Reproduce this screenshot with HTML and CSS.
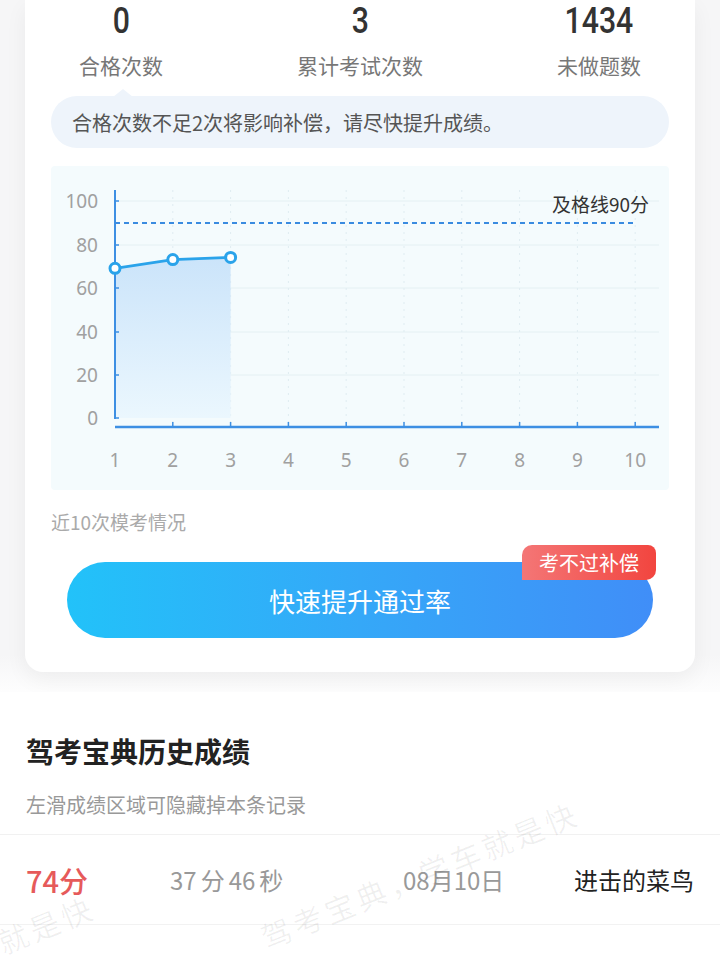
FILE: index.html
```html
<!DOCTYPE html>
<html lang="zh-CN">
<head>
<meta charset="utf-8">
<title>模考成绩</title>
<link rel="stylesheet" href="styles.css">
</head>
<body>
<div class="top">
  <div class="card">
    <div class="stats">
      <div class="stat"><div class="num">0</div><div class="label">合格次数</div></div>
      <div class="stat"><div class="num">3</div><div class="label">累计考试次数</div></div>
      <div class="stat"><div class="num">1434</div><div class="label">未做题数</div></div>
    </div>
    <div class="notice">合格次数不足2次将影响补偿，请尽快提升成绩。</div>
    <div class="chart">
      <svg class="chart-svg" viewBox="0 0 618 324" width="618" height="324">
        <defs>
          <linearGradient id="area" x1="0" y1="0" x2="0" y2="1">
            <stop offset="0" stop-color="#cbe4fa"/>
            <stop offset="1" stop-color="#ebf7fe"/>
          </linearGradient>
        </defs>
        <g stroke="#e4f0f3" stroke-width="1">
          <line x1="64" y1="35" x2="608" y2="35"/>
          <line x1="64" y1="79" x2="608" y2="79"/>
          <line x1="64" y1="122" x2="608" y2="122"/>
          <line x1="64" y1="166" x2="608" y2="166"/>
          <line x1="64" y1="209" x2="608" y2="209"/>
        </g>
        <g stroke="#dfecf1" stroke-width="1" stroke-dasharray="2 5">
          <line x1="121.8" y1="24" x2="121.8" y2="258"/>
          <line x1="179.6" y1="24" x2="179.6" y2="258"/>
          <line x1="237.4" y1="24" x2="237.4" y2="258"/>
          <line x1="295.2" y1="24" x2="295.2" y2="258"/>
          <line x1="353" y1="24" x2="353" y2="258"/>
          <line x1="410.8" y1="24" x2="410.8" y2="258"/>
          <line x1="468.6" y1="24" x2="468.6" y2="258"/>
          <line x1="526.4" y1="24" x2="526.4" y2="258"/>
          <line x1="584.2" y1="24" x2="584.2" y2="258"/>
        </g>
        <polygon points="64,102.3 121.8,93.6 179.6,91.4 179.6,252 64,252" fill="url(#area)"/>
        <line x1="64" y1="24" x2="64" y2="253" stroke="#3d8fe3" stroke-width="2"/>
        <g stroke="#3d8fe3" stroke-width="1.5">
          <line x1="64" y1="35" x2="68" y2="35"/>
          <line x1="64" y1="79" x2="68" y2="79"/>
          <line x1="64" y1="122" x2="68" y2="122"/>
          <line x1="64" y1="166" x2="68" y2="166"/>
          <line x1="64" y1="209" x2="68" y2="209"/>
          <line x1="64" y1="252" x2="68" y2="252"/>
        </g>
        <line x1="64" y1="261" x2="608" y2="261" stroke="#3d8fe3" stroke-width="2.5"/>
        <g stroke="#3d8fe3" stroke-width="1.5">
          <line x1="121.8" y1="256" x2="121.8" y2="261"/>
          <line x1="179.6" y1="256" x2="179.6" y2="261"/>
          <line x1="237.4" y1="256" x2="237.4" y2="261"/>
          <line x1="295.2" y1="256" x2="295.2" y2="261"/>
          <line x1="353" y1="256" x2="353" y2="261"/>
          <line x1="410.8" y1="256" x2="410.8" y2="261"/>
          <line x1="468.6" y1="256" x2="468.6" y2="261"/>
          <line x1="526.4" y1="256" x2="526.4" y2="261"/>
          <line x1="584.2" y1="256" x2="584.2" y2="261"/>
        </g>
        <line x1="64" y1="57" x2="584" y2="57" stroke="#3a8be0" stroke-width="1.8" stroke-dasharray="5 4"/>
        <polyline points="64,102.3 121.8,93.6 179.6,91.4" fill="none" stroke="#2aa3ea" stroke-width="2.8"/>
        <g fill="#ffffff" stroke="#2aa3ea" stroke-width="3">
          <circle cx="64" cy="102.3" r="5"/>
          <circle cx="121.8" cy="93.6" r="5"/>
          <circle cx="179.6" cy="91.4" r="5"/>
        </g>
        <g class="ylab" text-anchor="end">
          <text x="47" y="35">100</text>
          <text x="47" y="79">80</text>
          <text x="47" y="122">60</text>
          <text x="47" y="166">40</text>
          <text x="47" y="209">20</text>
          <text x="47" y="252">0</text>
        </g>
        <g class="xlab" text-anchor="middle">
          <text x="64" y="294">1</text>
          <text x="121.8" y="294">2</text>
          <text x="179.6" y="294">3</text>
          <text x="237.4" y="294">4</text>
          <text x="295.2" y="294">5</text>
          <text x="353" y="294">6</text>
          <text x="410.8" y="294">7</text>
          <text x="468.6" y="294">8</text>
          <text x="526.4" y="294">9</text>
          <text x="584.2" y="294">10</text>
        </g>
        <text class="passline" x="598" y="37" text-anchor="end">及格线90分</text>
      </svg>
    </div>
    <div class="caption">近10次模考情况</div>
    <div class="btn-wrap">
      <div class="btn">快速提升通过率</div>
      <div class="badge">考不过补偿</div>
    </div>
  </div>
</div>
<div class="history">
  <h2 class="h-title">驾考宝典历史成绩</h2>
  <div class="h-sub">左滑成绩区域可隐藏掉本条记录</div>
  <div class="list">
    <div class="row">
      <div class="score">74分</div>
      <div class="time">37<span class="unit">分</span>46<span class="unit">秒</span></div>
      <div class="date">08月10日</div>
      <div class="name">进击的菜鸟</div>
    </div>
    <div class="row row-next"></div>
  </div>
  <span class="wm wm1">驾考宝典，学车就是快</span>
  <span class="wm wm2">驾考宝典，学车就是快</span>
</div>
</body>
</html>
```

FILE: styles.css
```css
html, body {
  margin: 0;
  padding: 0;
  background: #ffffff;
  width: 720px;
  overflow: hidden;
}
body {
  font-family: "Noto Sans CJK SC", "Noto Sans", Roboto, sans-serif;
  color: #333;
}
.top {
  background: linear-gradient(to bottom, #f6f6f7 0, #f6f6f7 655px, #ffffff 700px);
  padding: 0 25px 20px;
}
.card {
  background: #ffffff;
  border-radius: 0 0 18px 18px;
  padding: 0 26px 34px;
  box-shadow: 0 8px 22px rgba(0, 0, 0, 0.05);
}
.stats {
  display: flex;
  justify-content: space-between;
  padding: 0 28px;
}
.stat {
  display: flex;
  flex-direction: column;
  align-items: center;
}
.num {
  font-family: Roboto, "Noto Sans", sans-serif;
  font-weight: 500;
  font-size: 36px;
  line-height: 42px;
  color: #333;
  transform: scaleX(0.84);
}
.label {
  margin-top: 8px;
  font-size: 21px;
  line-height: 30px;
  color: #777;
}
.notice {
  position: relative;
  margin-top: 16px;
  height: 52px;
  border-radius: 26px;
  background: #eef4fb;
  display: flex;
  align-items: center;
  padding: 0 21px;
  font-size: 20px;
  color: #555;
}
.notice::before {
  content: "";
  position: absolute;
  left: 62px;
  top: -7px;
  border-left: 10px solid transparent;
  border-right: 10px solid transparent;
  border-bottom: 8px solid #eef4fb;
}
.chart {
  margin-top: 18px;
  height: 324px;
  background: #f4fbfd;
  border-radius: 4px;
}
.chart-svg {
  display: block;
}
.ylab text, .xlab text {
  font-family: "Noto Sans", Roboto, sans-serif;
  font-size: 19px;
  fill: #a0a0a0;
  dominant-baseline: central;
}
.passline {
  font-family: "Noto Sans CJK SC", sans-serif;
  font-size: 19px;
  fill: #333;
  dominant-baseline: central;
}
.caption {
  margin-top: 19px;
  font-size: 19px;
  line-height: 26px;
  color: #aaa;
}
.btn-wrap {
  position: relative;
  margin: 27px 16px 0;
}
.btn {
  height: 76px;
  border-radius: 38px;
  background: linear-gradient(90deg, #22c2f9 0%, #35a8f8 50%, #408ef8 100%);
  color: #ffffff;
  font-size: 26px;
  display: flex;
  align-items: center;
  justify-content: center;
}
.badge {
  position: absolute;
  top: -17px;
  right: -3px;
  width: 134px;
  height: 35px;
  line-height: 35px;
  text-align: center;
  color: #ffffff;
  font-size: 20px;
  border-radius: 10px 8px 10px 0;
  background: linear-gradient(90deg, #f47676 0%, #f2453f 100%);
}
.history {
  position: relative;
  overflow: hidden;
  background: #ffffff;
  padding-top: 39px;
  height: 229px;
}
.h-title {
  margin: 0;
  padding: 0 26px;
  font-size: 28px;
  line-height: 40px;
  font-weight: 700;
  color: #222;
}
.h-sub {
  margin-top: 21px;
  padding: 0 26px;
  font-size: 20px;
  line-height: 26px;
  color: #999;
}
.list {
  margin-top: 16px;
  border-top: 1px solid #f1f1f1;
}
.row {
  display: grid;
  grid-template-columns: 144px 233px 1fr auto;
  align-items: center;
  height: 89px;
  padding: 0 26px;
  border-bottom: 1px solid #f2f2f2;
}
.row-next {
  border-bottom: none;
}
.score {
  font-size: 29px;
  font-weight: 500;
  color: #e65a5a;
}
.time {
  font-size: 24px;
  color: #999;
}
.unit {
  margin: 0 4px;
}
.date {
  font-size: 24px;
  color: #999;
}
.name {
  font-size: 24px;
  color: #222;
}
.wm {
  position: absolute;
  font-size: 30px;
  line-height: 40px;
  letter-spacing: 4px;
  white-space: nowrap;
  color: rgba(0, 0, 0, 0.06);
  transform-origin: 0 50%;
  transform: rotate(-22deg);
  pointer-events: none;
}
.wm1 {
  left: 262px;
  top: 226px;
}
.wm2 {
  left: -222px;
  top: 320px;
}
```
